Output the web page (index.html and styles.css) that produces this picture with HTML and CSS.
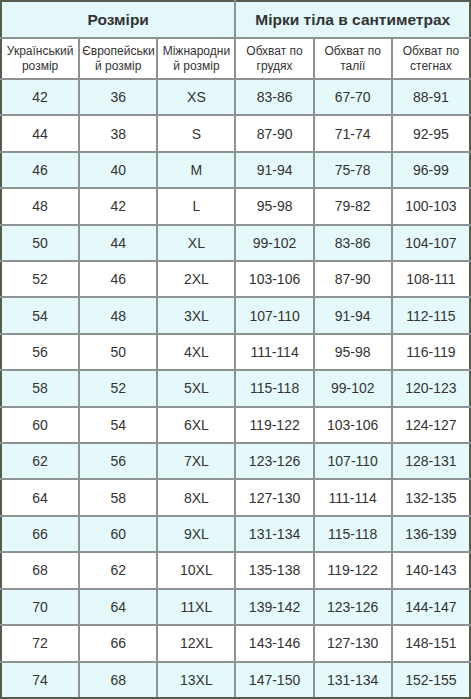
FILE: index.html
```html
<!DOCTYPE html>
<html lang="uk">
<head>
<meta charset="utf-8">
<title>Таблиця розмірів</title>
<link rel="stylesheet" href="styles.css">
</head>
<body>
<table class="sizes">
  <colgroup>
    <col class="c"><col class="c"><col class="c"><col class="c"><col class="c"><col class="c">
  </colgroup>
  <thead>
    <tr class="h1">
      <th colspan="3">Розміри</th>
      <th colspan="3">Мірки тіла в сантиметрах</th>
    </tr>
    <tr class="h2">
      <th>Український розмір</th>
      <th>Європейськи й розмір</th>
      <th>Міжнародни й розмір</th>
      <th>Обхват по грудях</th>
      <th>Обхват по талії</th>
      <th>Обхват по стегнах</th>
    </tr>
  </thead>
  <tbody>
    <tr class="alt"><td>42</td><td>36</td><td>XS</td><td>83-86</td><td>67-70</td><td>88-91</td></tr>
    <tr><td>44</td><td>38</td><td>S</td><td>87-90</td><td>71-74</td><td>92-95</td></tr>
    <tr class="alt"><td>46</td><td>40</td><td>M</td><td>91-94</td><td>75-78</td><td>96-99</td></tr>
    <tr><td>48</td><td>42</td><td>L</td><td>95-98</td><td>79-82</td><td>100-103</td></tr>
    <tr class="alt"><td>50</td><td>44</td><td>XL</td><td>99-102</td><td>83-86</td><td>104-107</td></tr>
    <tr><td>52</td><td>46</td><td>2XL</td><td>103-106</td><td>87-90</td><td>108-111</td></tr>
    <tr class="alt"><td>54</td><td>48</td><td>3XL</td><td>107-110</td><td>91-94</td><td>112-115</td></tr>
    <tr><td>56</td><td>50</td><td>4XL</td><td>111-114</td><td>95-98</td><td>116-119</td></tr>
    <tr class="alt"><td>58</td><td>52</td><td>5XL</td><td>115-118</td><td>99-102</td><td>120-123</td></tr>
    <tr><td>60</td><td>54</td><td>6XL</td><td>119-122</td><td>103-106</td><td>124-127</td></tr>
    <tr class="alt"><td>62</td><td>56</td><td>7XL</td><td>123-126</td><td>107-110</td><td>128-131</td></tr>
    <tr><td>64</td><td>58</td><td>8XL</td><td>127-130</td><td>111-114</td><td>132-135</td></tr>
    <tr class="alt"><td>66</td><td>60</td><td>9XL</td><td>131-134</td><td>115-118</td><td>136-139</td></tr>
    <tr><td>68</td><td>62</td><td>10XL</td><td>135-138</td><td>119-122</td><td>140-143</td></tr>
    <tr class="alt"><td>70</td><td>64</td><td>11XL</td><td>139-142</td><td>123-126</td><td>144-147</td></tr>
    <tr><td>72</td><td>66</td><td>12XL</td><td>143-146</td><td>127-130</td><td>148-151</td></tr>
    <tr class="alt"><td>74</td><td>68</td><td>13XL</td><td>147-150</td><td>131-134</td><td>152-155</td></tr>
  </tbody>
</table>
</body>
</html>
```
FILE: styles.css
```css
html, body {
  margin: 0;
  padding: 0;
  background: #ffffff;
}
.sizes {
  width: 471px;
  height: 699px;
  border-collapse: collapse;
  table-layout: fixed;
  font-family: "Liberation Sans", Arial, sans-serif;
  color: #333333;
  border: 2px solid #575c4c;
}
.sizes th, .sizes td {
  border: 2px solid #8d9292;
  text-align: center;
  vertical-align: middle;
  padding: 0 2px;
}
.h1 th {
  height: 35px;
  font-size: 15.5px;
  font-weight: bold;
  background: #e4f8f9;
  border-top: 2px solid #575c4c;
}
.h2 th {
  height: 39px;
  font-size: 12px;
  font-weight: normal;
  line-height: 15px;
  background: #ffffff;
}
.sizes td {
  height: 34px;
  font-size: 14px;
  background: #ffffff;
}
.sizes tr.alt td {
  background: #e6f9fa;
}
.sizes th:first-child, .sizes td:first-child {
  border-left: 2px solid #575c4c;
}
.sizes th:last-child, .sizes td:last-child {
  border-right: 2px solid #575c4c;
}
.sizes tbody tr:last-child td {
  border-bottom: 2px solid #575c4c;
}
```
